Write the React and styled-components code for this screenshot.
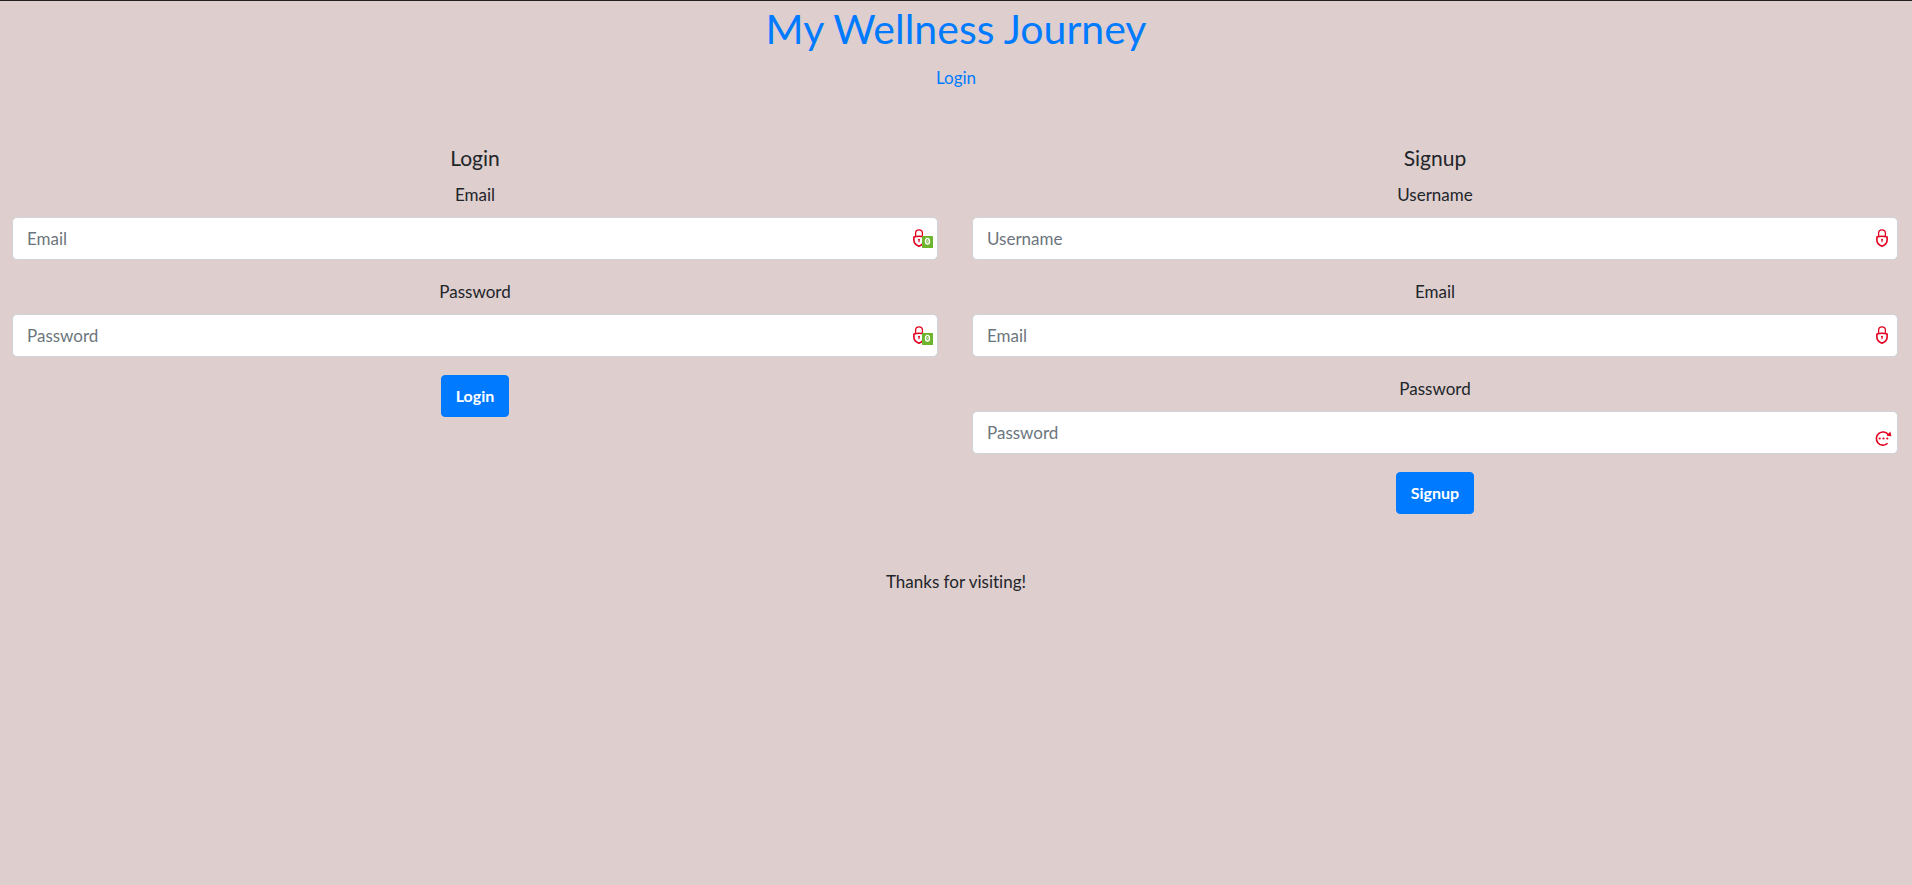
import React from "react";
import styled, { createGlobalStyle } from "styled-components";

const GlobalStyle = createGlobalStyle`
  *, *::before, *::after { box-sizing: border-box; }
  body {
    margin: 0;
    background: #decece;
    color: #212529;
    font-family: "Gill Sans", "Gill Sans MT", Lato, sans-serif;
    font-size: 17px;
    line-height: 28px;
    font-variant-ligatures: none;
    text-align: center;
  }
`;

const Page = styled.div`
  border-top: 1px solid #231f20;
`;

const Header = styled.header`
  margin-bottom: 52px;
`;

const Title = styled.h1`
  margin: 0 0 8px;
  font-size: 41px;
  font-weight: 400;
  line-height: 55px;
  color: #007bff;
`;

const NavLink = styled.a`
  color: #007bff;
  text-decoration: none;
`;

const Forms = styled.main`
  display: grid;
  grid-template-columns: 1fr 1fr;
  gap: 34px;
  padding: 0 14px 0 12px;
`;

const FormTitle = styled.h2`
  margin: 0 0 9px;
  font-size: 21px;
  font-weight: 400;
  line-height: 28px;
`;

const Field = styled.div`
  margin-bottom: 18px;
`;

const Label = styled.label`
  display: block;
  margin-bottom: 8px;
`;

const InputWrap = styled.div`
  position: relative;
`;

const Input = styled.input`
  display: block;
  width: 100%;
  height: 43px;
  padding: 6px 48px 6px 14px;
  border: 1px solid #ced4da;
  border-radius: 5px;
  background: #fff;
  color: #495057;
  font: inherit;
  &::placeholder { color: #6c757d; opacity: 1; }
`;

const Adornment = styled.svg`
  position: absolute;
  top: 11px;
  right: 4px;
`;

const Button = styled.button`
  height: 42px;
  padding: 0 14px;
  border: 1px solid #007bff;
  border-radius: 4px;
  background: #007bff;
  color: #fff;
  font: inherit;
  font-size: 16px;
  font-weight: 700;
`;

const Footer = styled.footer`
  padding: 54px 0 27px;
`;

const Padlock = ({ x }) => (
  <g transform={`translate(${x} 1)`} fill="none" stroke="#e2001f">
    <path d="M2.6 7V4.2a3.4 3.4 0 0 1 6.8 0V7" strokeWidth="1.3" />
    <path
      d="M0.9 8Q6 6.4 11.1 8V11.5Q11 15.2 6 17.2Q1 15.2 0.9 11.5Z"
      strokeWidth="1.6"
      strokeLinejoin="round"
    />
    <path d="M6 10V13.2" strokeWidth="1.1" />
    <circle cx="6" cy="10.6" r="0.9" fill="#e2001f" stroke="none" />
  </g>
);

const LockIcon = () => (
  <Adornment width="24" height="20" viewBox="0 0 24 20" aria-hidden="true">
    <Padlock x={6} />
  </Adornment>
);

const LockCountIcon = () => (
  <Adornment width="24" height="20" viewBox="0 0 24 20" aria-hidden="true">
    <Padlock x={3} />
    <rect x="12" y="8" width="11" height="12" rx="0.5" fill="#6cb52d" />
    <ellipse cx="17.5" cy="13.2" rx="2" ry="2.8" fill="none" stroke="#fff" strokeWidth="1.4" />
    <path d="M16.6 14.6L18.4 11.8" stroke="#fff" strokeWidth="0.8" />
  </Adornment>
);

const GenerateIcon = () => (
  <Adornment width="24" height="26" viewBox="0 0 24 26" aria-hidden="true">
    <path
      d="M17.6 21.3A6.6 6.6 0 1 1 18.4 12.8"
      fill="none"
      stroke="#e2001f"
      strokeWidth="1.6"
    />
    <path d="M20.4 9.6L21.4 14.2L16.6 13.8Z" fill="#e2001f" />
    <circle cx="9.7" cy="16.5" r="1.1" fill="#e2001f" />
    <circle cx="13.5" cy="16.5" r="1.1" fill="#e2001f" />
    <circle cx="17.3" cy="16.5" r="1.1" fill="#e2001f" />
  </Adornment>
);

const FormField = ({ id, label, type = "text", icon }) => (
  <Field>
    <Label htmlFor={id}>{label}</Label>
    <InputWrap>
      <Input id={id} type={type} placeholder={label} />
      {icon}
    </InputWrap>
  </Field>
);

export default function App() {
  return (
    <Page>
      <GlobalStyle />
      <Header>
        <Title>My Wellness Journey</Title>
        <nav>
          <NavLink href="#login">Login</NavLink>
        </nav>
      </Header>
      <Forms>
        <form id="login">
          <FormTitle>Login</FormTitle>
          <FormField id="login-email" label="Email" type="email" icon={<LockCountIcon />} />
          <FormField id="login-password" label="Password" type="password" icon={<LockCountIcon />} />
          <Button type="button">Login</Button>
        </form>
        <form id="signup">
          <FormTitle>Signup</FormTitle>
          <FormField id="signup-username" label="Username" icon={<LockIcon />} />
          <FormField id="signup-email" label="Email" type="email" icon={<LockIcon />} />
          <FormField id="signup-password" label="Password" type="password" icon={<GenerateIcon />} />
          <Button type="button">Signup</Button>
        </form>
      </Forms>
      <Footer>Thanks for visiting!</Footer>
    </Page>
  );
}
